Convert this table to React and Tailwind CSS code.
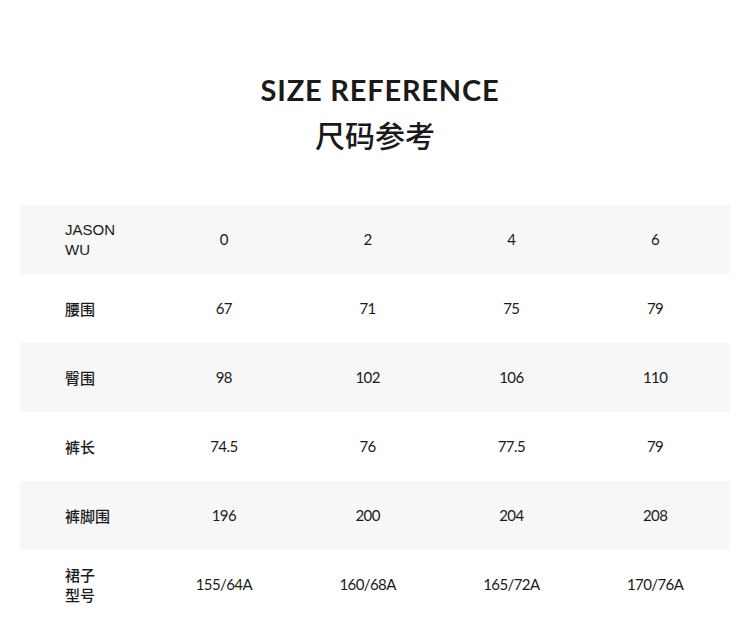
const sizes = ["0", "2", "4", "6"];

const rows = [
  { label: ["腰围"], values: ["67", "71", "75", "79"] },
  { label: ["臀围"], values: ["98", "102", "106", "110"] },
  { label: ["裤长"], values: ["74.5", "76", "77.5", "79"] },
  { label: ["裤脚围"], values: ["196", "200", "204", "208"] },
  { label: ["裙子", "型号"], values: ["155/64A", "160/68A", "165/72A", "170/76A"] },
];

const App = () => {
  return (
    <div className="w-[750px] h-[642px] bg-white text-[#1a1a1a] font-['Lato','Noto_Sans_CJK_SC',sans-serif]">
      {/* Header */}
      <div className="pt-[70px] flex flex-col items-center">
        <h1 className="text-[29px] leading-[40px] font-bold tracking-[0.8px] pl-[10px]">
          SIZE REFERENCE
        </h1>
        <h2 className="text-[30px] leading-[40px] font-medium font-['Noto_Sans_CJK_SC',sans-serif] mt-[4px]">
          尺码参考
        </h2>
      </div>

      {/* Table */}
      <div className="mx-[20px] mt-[51px] text-[15px]">
        <div className="grid grid-cols-[132px_repeat(4,1fr)] pr-[3px] h-[69px] items-center bg-[#f7f7f7]">
          <div className="pl-[45px] leading-[20px] font-['Liberation_Sans',sans-serif]">
            JASON
            <br />
            WU
          </div>
          {sizes.map((s) => (
            <div key={s} className="text-center tracking-[-0.6px]">
              {s}
            </div>
          ))}
        </div>

        {rows.map((row, i) => (
          <div
            key={i}
            className={
              "grid grid-cols-[132px_repeat(4,1fr)] pr-[3px] h-[69px] items-center " +
              (i % 2 === 1 ? "bg-[#f7f7f7]" : "bg-white")
            }
          >
            <div className="pl-[45px] leading-[20px] font-medium font-['Noto_Sans_CJK_SC',sans-serif]">
              {row.label.map((l) => (
                <div key={l}>{l}</div>
              ))}
            </div>
            {row.values.map((v, j) => (
              <div key={j} className="text-center tracking-[-0.6px]">
                {v}
              </div>
            ))}
          </div>
        ))}
      </div>
    </div>
  );
};

export default App;
